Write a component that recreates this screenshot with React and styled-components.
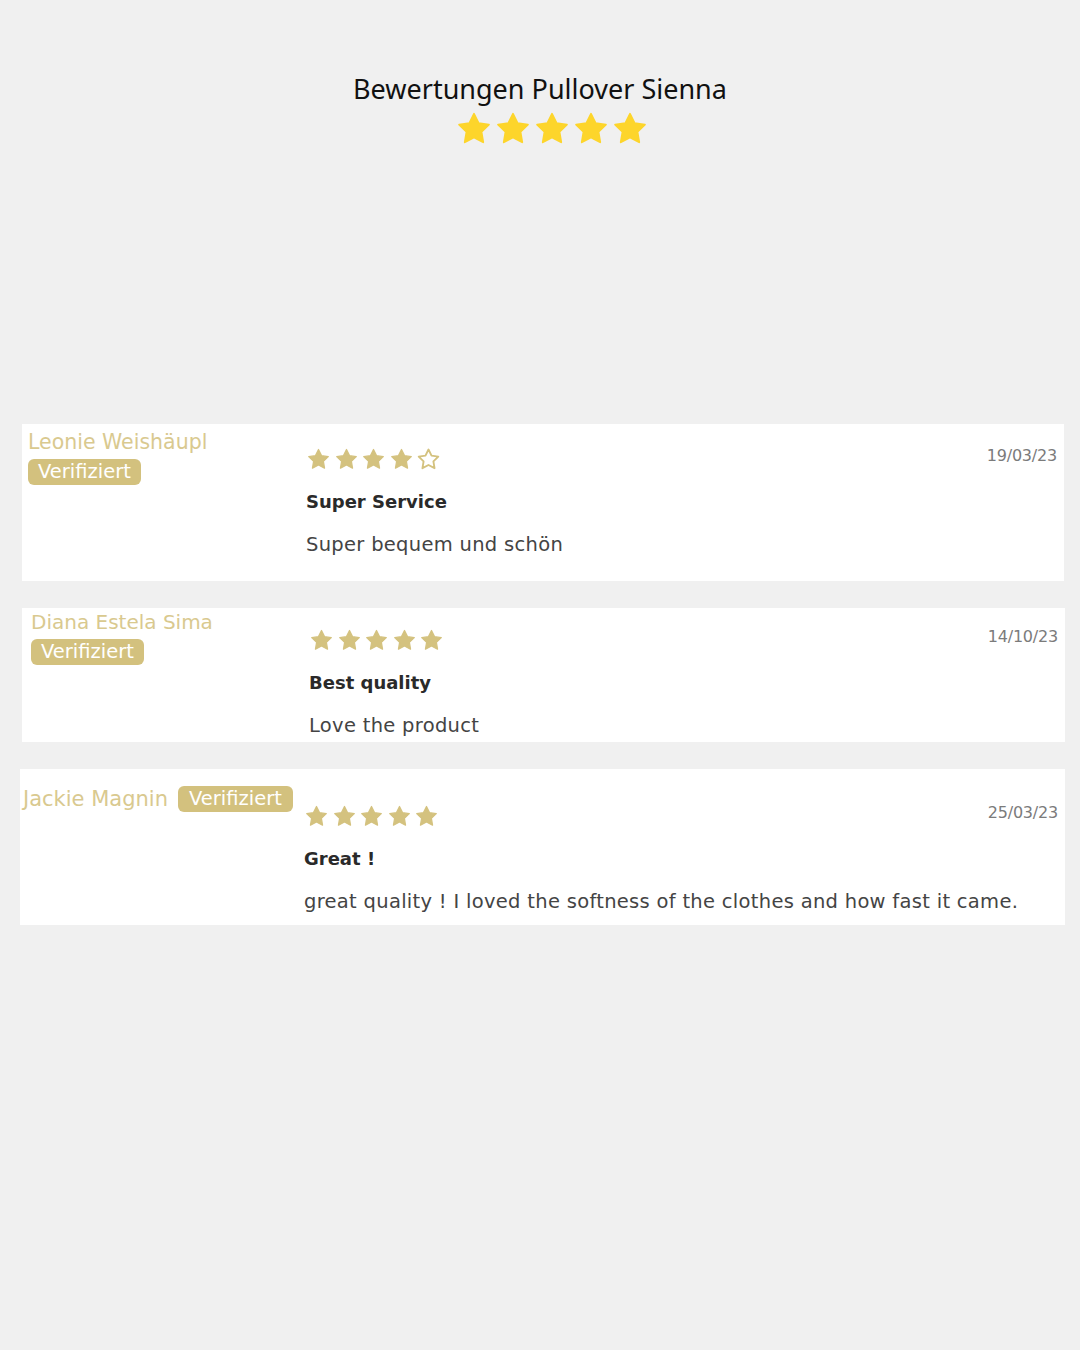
import React from "react";
import styled, { createGlobalStyle } from "styled-components";

const GlobalStyle = createGlobalStyle`
  html, body {
    margin: 0;
    padding: 0;
    background: #f0f0f0;
  }
`;

const Page = styled.div`
  width: 1080px;
  min-height: 1350px;
  background: #f0f0f0;
  padding-top: 70px;
  box-sizing: border-box;
  font-family: "DejaVu Sans", Verdana, sans-serif;
`;

const Header = styled.header`
  display: flex;
  flex-direction: column;
  align-items: center;
`;

const Title = styled.h1`
  margin: 0;
  font-family: "Noto Sans", "Open Sans", sans-serif;
  font-weight: 400;
  font-size: 27px;
  line-height: 38px;
  color: #111;
`;

const StarRow = styled.div`
  display: flex;
  gap: ${(p) => p.$gap}px;
  margin-top: ${(p) => p.$mt || 0}px;
  margin-left: ${(p) => p.$ml || 0}px;
`;

const List = styled.section`
  display: flex;
  flex-direction: column;
  gap: 27px;
  margin-top: 276px;
`;

const Card = styled.article`
  display: grid;
  grid-template-columns: ${(p) => p.$leftW}px 1fr;
  align-items: start;
  background: #fff;
  margin-left: ${(p) => p.$ml}px;
  margin-right: ${(p) => p.$mr}px;
  padding-bottom: ${(p) => p.$pb}px;
`;

const Author = styled.div`
  display: flex;
  flex-direction: ${(p) => (p.$inline ? "row" : "column")};
  align-items: ${(p) => (p.$inline ? "center" : "flex-start")};
  gap: ${(p) => (p.$inline ? 10 : 6)}px;
  padding-top: ${(p) => p.$pt}px;
  padding-left: ${(p) => p.$pl}px;
`;

const Name = styled.span`
  font-size: ${(p) => p.$size}px;
  line-height: 22px;
  color: #d9c98f;
  white-space: nowrap;
`;

const Badge = styled.span`
  display: inline-block;
  background: #d3c17e;
  color: #fff;
  font-size: 19.5px;
  line-height: 26px;
  padding: 0 ${(p) => p.$px}px;
  border-radius: 6px;
  white-space: nowrap;
`;

const Content = styled.div`
  padding-top: ${(p) => p.$pt}px;
  padding-right: 7px;
`;

const TopRow = styled.div`
  display: flex;
  justify-content: space-between;
  align-items: flex-start;
`;

const Date = styled.span`
  font-size: 16px;
  line-height: 18px;
  color: #7b7b7b;
  letter-spacing: -0.2px;
`;

const ReviewTitle = styled.h3`
  margin: 18px 0 0;
  font-size: 18px;
  line-height: 24px;
  font-weight: 700;
  color: #2a2a2a;
`;

const Body = styled.p`
  margin: 19px 0 0;
  font-size: 19.5px;
  line-height: 24px;
  color: #444;
  letter-spacing: 0.3px;
`;

const STAR =
  "M12 2.4l2.9 5.9 6.5.95-4.7 4.6 1.1 6.5L12 17.3l-5.8 3.05 1.1-6.5-4.7-4.6 6.5-.95z";

function Star({ size, color, filled = true }) {
  return (
    <svg width={size} height={size} viewBox="0 0 24 24">
      <path
        d={STAR}
        fill={filled ? color : "none"}
        stroke={color}
        strokeWidth={filled ? 1.2 : 1.8}
        strokeLinejoin="round"
      />
    </svg>
  );
}

function Stars({ count, size, gap, color, mt, ml }) {
  return (
    <StarRow $gap={gap} $mt={mt} $ml={ml}>
      {[0, 1, 2, 3, 4].map((i) => (
        <Star key={i} size={size} color={color} filled={i < count} />
      ))}
    </StarRow>
  );
}

const reviews = [
  {
    name: "Leonie Weishäupl",
    rating: 4,
    date: "19/03/23",
    title: "Super Service",
    text: "Super bequem und schön",
    layout: { ml: 22, mr: 16, leftW: 284, pl: 6, pt: 7, rt: 23, pb: 24, nameSize: 20.5, bx: 10 },
  },
  {
    name: "Diana Estela Sima",
    rating: 5,
    date: "14/10/23",
    title: "Best quality",
    text: "Love the product",
    layout: { ml: 22, mr: 15, leftW: 287, pl: 9, pt: 3, rt: 20, pb: 4, nameSize: 20, bx: 10 },
  },
  {
    name: "Jackie Magnin",
    rating: 5,
    date: "25/03/23",
    title: "Great !",
    text: "great quality ! I loved the softness of the clothes and how fast it came.",
    layout: { ml: 20, mr: 15, leftW: 284, pl: 3, pt: 17, rt: 35, pb: 11, nameSize: 21, bx: 11, inline: true },
  },
];

function App() {
  return (
    <Page>
      <GlobalStyle />
      <Header>
        <Title>Bewertungen Pullover Sienna</Title>
        <Stars count={5} size={38} gap={1} color="#fdd52b" mt={2} ml={24} />
      </Header>
      <List>
        {reviews.map((r) => {
          const l = r.layout;
          return (
            <Card key={r.name} $ml={l.ml} $mr={l.mr} $leftW={l.leftW} $pb={l.pb}>
              <Author $inline={l.inline} $pt={l.pt} $pl={l.pl}>
                <Name $size={l.nameSize}>{r.name}</Name>
                <Badge $px={l.bx}>Verifiziert</Badge>
              </Author>
              <Content $pt={l.rt}>
                <TopRow>
                  <Stars count={r.rating} size={25} gap={2.5} color="#d4c27f" />
                  <Date>{r.date}</Date>
                </TopRow>
                <ReviewTitle>{r.title}</ReviewTitle>
                <Body>{r.text}</Body>
              </Content>
            </Card>
          );
        })}
      </List>
    </Page>
  );
}

export default App;
